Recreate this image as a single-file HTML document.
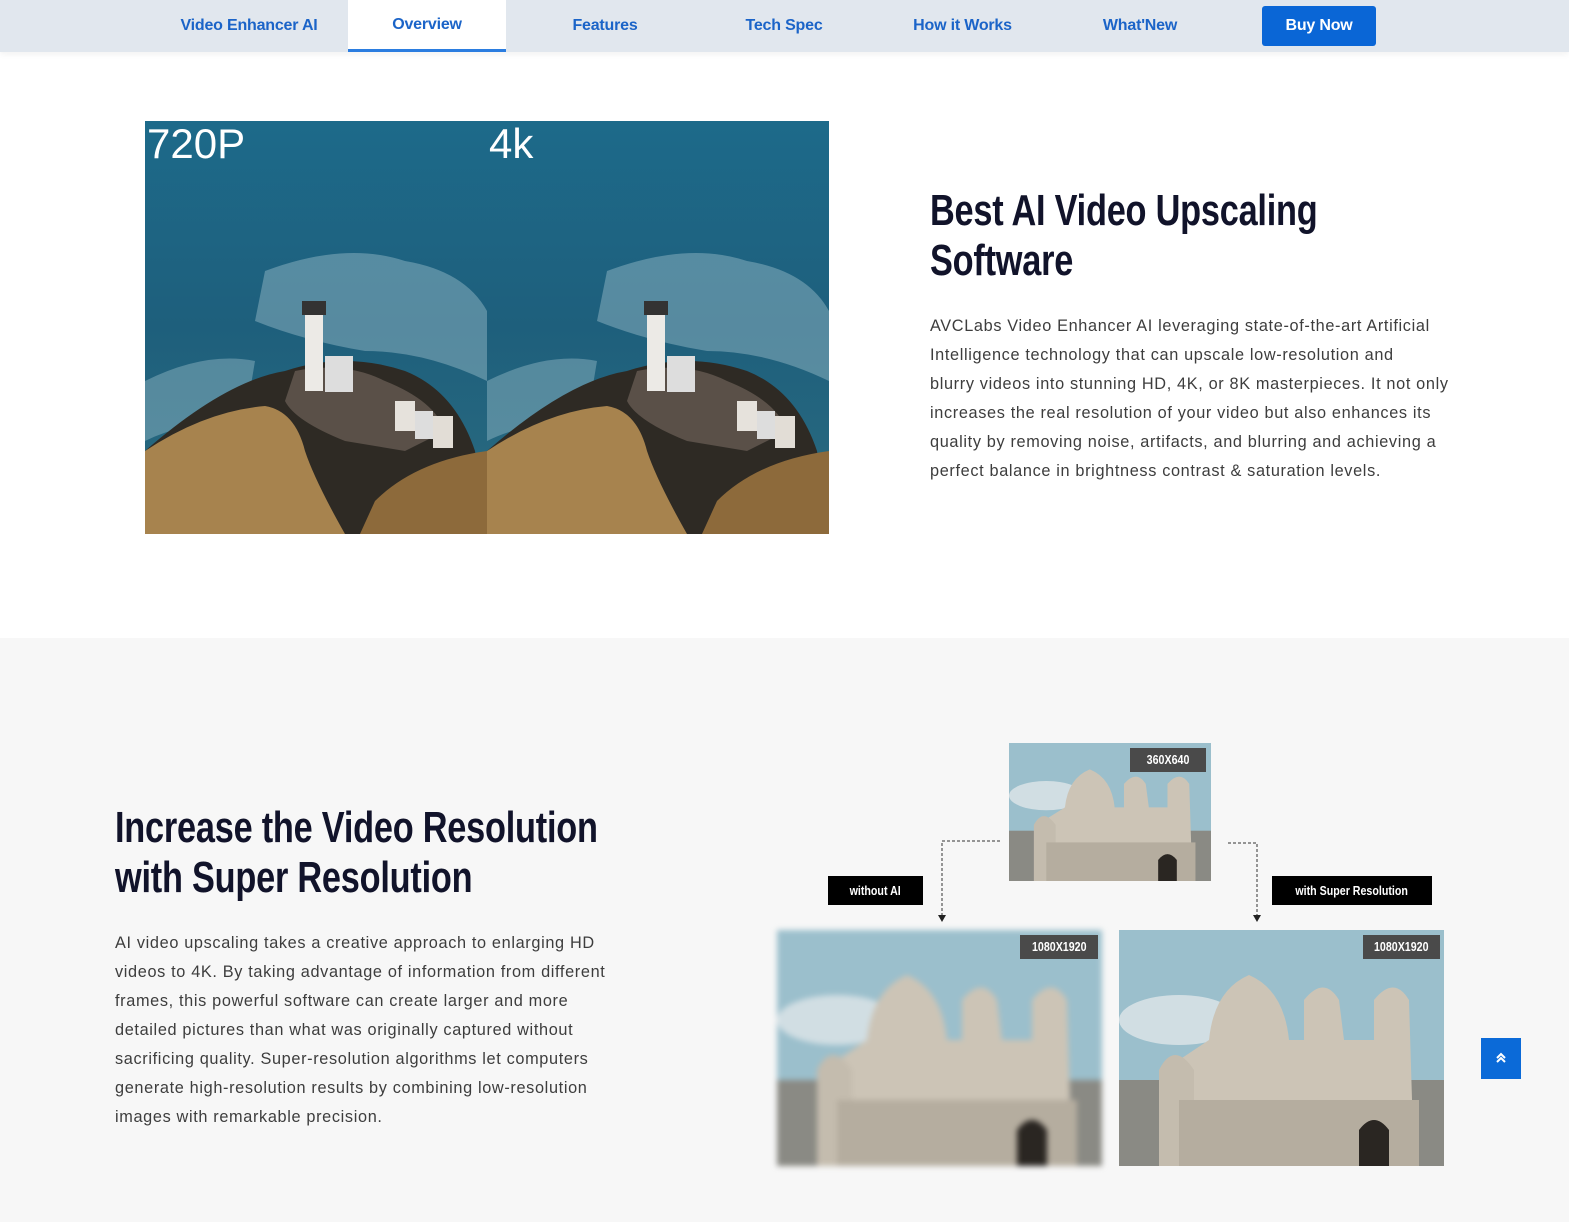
<!DOCTYPE html>
<html><head><meta charset="utf-8"><style>
*{margin:0;padding:0;box-sizing:border-box}
body{width:1569px;height:1222px;overflow:hidden;background:#fff;font-family:"Liberation Sans",sans-serif;position:relative}
.nav{position:absolute;left:0;top:0;width:1569px;height:52px;background:#e1e7ee;box-shadow:0 2px 6px rgba(0,0,0,.06)}
.nav a{position:absolute;top:0;height:52px;line-height:52px;color:#1b64c8;font-weight:bold;font-size:16px;text-decoration:none;text-align:center;letter-spacing:-.2px}
.ov{background:#fff;border-bottom:3px solid #2b7de0;line-height:50px!important}
.buy{top:6px!important;height:40px!important;line-height:40px!important;background:#0a66d6;color:#fff!important;border-radius:3px}
h2{position:absolute;font-weight:bold;font-size:44px;line-height:50px;color:#11132a;white-space:nowrap;transform:scaleX(.78);transform-origin:0 0;letter-spacing:-.3px}
p{position:absolute;font-size:16.3px;line-height:29px;color:#3d3d3d;white-space:nowrap;letter-spacing:.65px}
.sec2{position:absolute;left:0;top:638px;width:1569px;height:584px;background:#f7f7f7}
.tag,.lab{position:absolute;color:#fff;font-weight:bold;font-size:13px;text-align:center;white-space:nowrap}
.tag{background:#4a4a4a}
.lab{background:#000;height:29px;line-height:29px}
.tag span,.lab span{display:inline-block;transform:scaleX(.82)}
</style></head><body>
<div class="nav">
<a style="left:165px;width:168px">Video Enhancer AI</a>
<a class="ov" style="left:348px;width:158px">Overview</a>
<a style="left:545px;width:120px">Features</a>
<a style="left:724px;width:120px">Tech Spec</a>
<a style="left:895px;width:135px">How it Works</a>
<a style="left:1080px;width:120px">What'New</a>
<a class="buy" style="left:1262px;width:114px">Buy Now</a>
</div>

<svg style="position:absolute;left:145px;top:121px" width="685" height="413" viewBox="0 0 685 413">
<defs><linearGradient id="sea" x1="0" y1="0" x2="0" y2="1"><stop offset="0" stop-color="#1d6a8a"/><stop offset=".5" stop-color="#1e5f7c"/><stop offset="1" stop-color="#2b6c80"/></linearGradient></defs>
<g id="half">
<rect width="342" height="413" fill="url(#sea)"/>
<path d="M120 150 Q200 120 260 140 Q320 150 342 190 L342 260 Q280 230 220 230 Q160 220 110 200 Z" fill="#8fb6c4" opacity=".5"/>
<path d="M0 260 Q60 230 110 240 L100 300 Q40 300 0 320Z" fill="#8ab2bf" opacity=".5"/>
<path d="M0 330 Q80 260 140 250 Q200 230 260 250 Q310 270 330 330 L342 413 L0 413Z" fill="#2e2a24"/>
<path d="M0 330 Q60 290 120 285 Q150 290 160 330 Q170 360 200 413 L0 413Z" fill="#a7834e"/>
<path d="M230 380 Q270 340 342 330 L342 413 L215 413Z" fill="#8d6a3b"/>
<path d="M150 250 Q200 240 240 260 Q290 280 300 310 L260 330 L200 320 Q150 300 140 280Z" fill="#5a5048"/>
<rect x="160" y="190" width="18" height="80" fill="#eceae6"/>
<rect x="157" y="180" width="24" height="14" fill="#333"/>
<rect x="180" y="235" width="28" height="36" fill="#ddd"/>
<rect x="250" y="280" width="20" height="30" fill="#e6e2dc"/><rect x="270" y="290" width="18" height="28" fill="#ddd"/><rect x="288" y="295" width="20" height="32" fill="#e2ddd6"/>
</g>
<use href="#half" x="342"/>
<text x="2" y="37" font-family="Liberation Sans" font-size="42" fill="#fff">720P</text>
<text x="344" y="37" font-family="Liberation Sans" font-size="42" fill="#fff">4k</text>
</svg>

<h2 style="left:930px;top:186px">Best AI Video Upscaling<br>Software</h2>
<p style="left:930px;top:312px">AVCLabs Video Enhancer AI leveraging state-of-the-art Artificial<br>Intelligence technology that can upscale low-resolution and<br>blurry videos into stunning HD, 4K, or 8K masterpieces. It not only<br>increases the real resolution of your video but also enhances its<br>quality by removing noise, artifacts, and blurring and achieving a<br>perfect balance in brightness contrast &amp; saturation levels.</p>

<div class="sec2"></div>
<h2 style="left:115px;top:803px">Increase the Video Resolution<br>with Super Resolution</h2>
<p style="left:115px;top:929px">AI video upscaling takes a creative approach to enlarging HD<br>videos to 4K. By taking advantage of information from different<br>frames, this powerful software can create larger and more<br>detailed pictures than what was originally captured without<br>sacrificing quality. Super-resolution algorithms let computers<br>generate high-resolution results by combining low-resolution<br>images with remarkable precision.</p>

<svg width="0" height="0" style="position:absolute"><defs>
<symbol id="cat" viewBox="0 0 325 236" preserveAspectRatio="none">
<rect width="325" height="236" fill="#9bbfcc"/>
<ellipse cx="60" cy="90" rx="60" ry="25" fill="#dfe6e8" opacity=".8"/>
<rect x="0" y="150" width="325" height="86" fill="#8a8a84"/>
<path d="M60 236 L60 130 L90 110 Q95 60 130 45 Q165 60 170 110 L185 110 L185 70 Q205 45 220 70 L225 110 L255 110 L255 70 Q275 45 290 70 L295 236Z" fill="#ccc4b6"/>
<path d="M40 236 L40 140 Q55 110 75 140 L75 236Z" fill="#c4bcae"/>
<rect x="60" y="170" width="240" height="66" fill="#b5ad9f"/>
<path d="M240 236 L240 200 Q255 180 270 200 L270 236Z" fill="#2a2622"/>
</symbol></defs></svg>

<svg style="position:absolute;left:1009px;top:743px" width="202" height="138"><use href="#cat" width="202" height="138"/></svg>
<div class="tag" style="left:1130px;top:748px;width:76px;height:24px;line-height:24px"><span>360X640</span></div>
<svg style="position:absolute;left:777px;top:930px;filter:blur(3px)" width="325" height="236"><use href="#cat" width="325" height="236"/></svg>
<svg style="position:absolute;left:1119px;top:930px" width="325" height="236"><use href="#cat" width="325" height="236"/></svg>
<div class="tag" style="left:1020px;top:935px;width:78px;height:24px;line-height:24px"><span>1080X1920</span></div>
<div class="tag" style="left:1363px;top:935px;width:77px;height:24px;line-height:24px"><span>1080X1920</span></div>
<div class="lab" style="left:828px;top:876px;width:95px"><span>without AI</span></div>
<div class="lab" style="left:1272px;top:876px;width:160px"><span>with Super Resolution</span></div>
<svg style="position:absolute;left:930px;top:835px" width="340" height="95">
<path d="M70 6 H12 V80 M298 8 H327 V80" fill="none" stroke="#333" stroke-dasharray="3 2"/>
<path d="M8 80 L16 80 L12 87Z M323 80 L331 80 L327 87Z" fill="#222"/>
</svg>

<div style="position:absolute;left:1481px;top:1038px;width:40px;height:41px;background:#0b6ad8"></div>
<svg style="position:absolute;left:1494px;top:1051px" width="14" height="14"><path d="M3 7 L7 3 L11 7 M3 11 L7 7 L11 11" fill="none" stroke="#fff" stroke-width="2"/></svg>
</body></html>
